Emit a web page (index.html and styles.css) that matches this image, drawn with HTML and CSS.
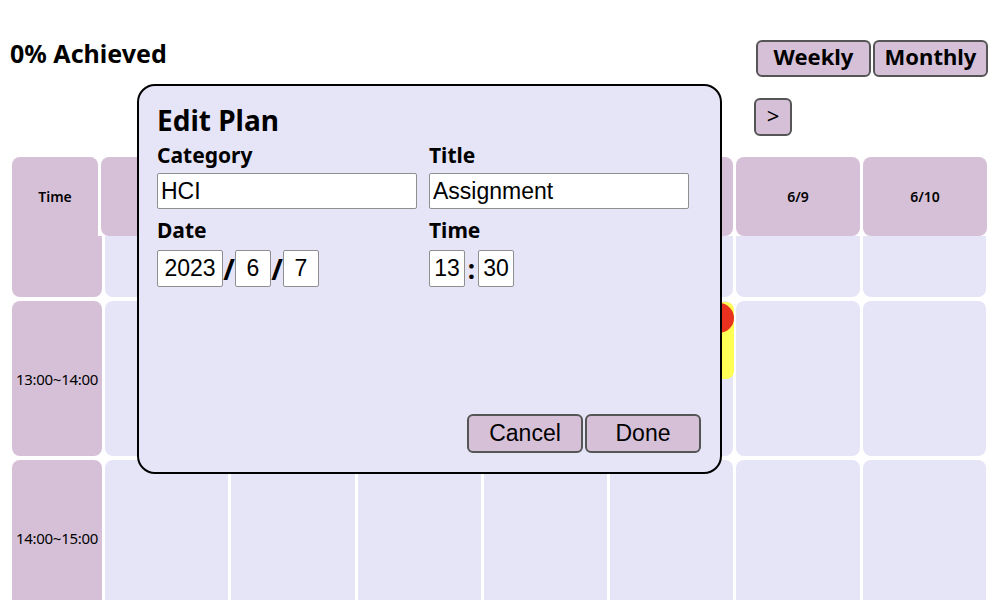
FILE: index.html
```html
<!DOCTYPE html>
<html lang="en">
<head>
<meta charset="utf-8">
<title>Planner</title>
<link rel="stylesheet" href="styles.css">
</head>
<body>
<div class="page">
  <header class="top">
    <h1 class="achieved">0% Achieved</h1>
    <div class="views">
      <button class="btn view-btn">Weekly</button>
      <button class="btn view-btn">Monthly</button>
    </div>
  </header>

  <nav class="week-nav">
    <button class="btn nav-btn">&gt;</button>
  </nav>

  <section class="calendar">
    <div class="cal-head">
      <div class="hcell">Time</div>
      <div class="hcell">6/4</div>
      <div class="hcell">6/5</div>
      <div class="hcell">6/6</div>
      <div class="hcell">6/7</div>
      <div class="hcell">6/8</div>
      <div class="hcell">6/9</div>
      <div class="hcell">6/10</div>
    </div>
    <div class="cal-body">
      <div class="tcell first"></div>
      <div class="dcell first"></div><div class="dcell first"></div><div class="dcell first"></div><div class="dcell first"></div><div class="dcell first"></div><div class="dcell first"></div><div class="dcell first"></div>

      <div class="tcell">13:00~14:00</div>
      <div class="dcell"></div><div class="dcell"></div><div class="dcell"></div><div class="dcell"></div>
      <div class="dcell"><div class="event"><span class="event-dot"></span></div></div>
      <div class="dcell"></div><div class="dcell"></div>

      <div class="tcell">14:00~15:00</div>
      <div class="dcell"></div><div class="dcell"></div><div class="dcell"></div><div class="dcell"></div><div class="dcell"></div><div class="dcell"></div><div class="dcell"></div>
    </div>
  </section>

  <div class="modal">
    <h2 class="modal-title">Edit Plan</h2>
    <div class="form-grid">
      <div class="field">
        <label class="field-label">Category</label>
        <input class="text-input" type="text" value="HCI">
      </div>
      <div class="field">
        <label class="field-label">Title</label>
        <input class="text-input" type="text" value="Assignment">
      </div>
      <div class="field">
        <label class="field-label">Date</label>
        <div class="inline-inputs">
          <input class="num-input year" type="text" value="2023">
          <span class="sep">/</span>
          <input class="num-input" type="text" value="6">
          <span class="sep">/</span>
          <input class="num-input" type="text" value="7">
        </div>
      </div>
      <div class="field">
        <label class="field-label">Time</label>
        <div class="inline-inputs">
          <input class="num-input" type="text" value="13">
          <span class="sep colon">:</span>
          <input class="num-input" type="text" value="30">
        </div>
      </div>
    </div>
    <div class="modal-actions">
      <button class="btn act-btn">Cancel</button>
      <button class="btn act-btn">Done</button>
    </div>
  </div>
</div>
</body>
</html>
```

FILE: styles.css
```css
* { box-sizing: border-box; }

html, body {
  margin: 0;
  padding: 0;
  background: #ffffff;
}

body {
  font-family: "Noto Sans", "Noto Sans CJK KR", sans-serif;
  color: #000;
  width: 1000px;
  height: 600px;
  overflow: hidden;
}

.page {
  position: relative;
  width: 1000px;
  height: 600px;
  padding-top: 40px;
  overflow: hidden;
}

.btn {
  background: #d6c0d8;
  border: 2px solid #555;
  border-radius: 6px;
  color: #000;
  padding: 0;
  cursor: pointer;
}

.top {
  display: flex;
  justify-content: space-between;
  align-items: center;
  height: 37px;
  padding: 0 12px 0 10px;
}

.achieved {
  margin: 0;
  font-size: 25px;
  font-weight: 700;
  line-height: 30px;
  position: relative;
  top: -6px;
}

.views {
  display: flex;
  gap: 2px;
}

.view-btn {
  width: 115px;
  height: 37px;
  font-family: "Noto Sans", sans-serif;
  font-weight: 700;
  font-size: 22px;
  line-height: 1;
  padding-bottom: 5px;
}

.week-nav {
  display: flex;
  justify-content: flex-end;
  align-items: center;
  margin-top: 21px;
  height: 38px;
  padding-right: 208px;
}

.nav-btn {
  width: 38px;
  height: 38px;
  font-family: "Noto Sans", sans-serif;
  font-size: 22px;
  line-height: 1;
  padding-bottom: 4px;
}

.calendar {
  margin: 21px 14px 0 12px;
}

.cal-head {
  display: grid;
  grid-template-columns: 86px repeat(7, 124px);
  column-gap: 3px;
  height: 79px;
}

.hcell {
  background: #d6c0d8;
  border-radius: 8px 8px 0 0;
  display: flex;
  align-items: center;
  justify-content: center;
  font-size: 14px;
  font-weight: 600;
}

.hcell + .hcell {
  border-radius: 8px;
}

.cal-body {
  display: grid;
  grid-template-columns: 90px repeat(7, 1fr);
  grid-template-rows: 61px 155px 155px;
  column-gap: 3px;
  row-gap: 4px;
}

.tcell {
  background: #d6c0d8;
  border-radius: 8px;
  display: flex;
  align-items: center;
  justify-content: center;
  font-size: 15px;
  letter-spacing: -0.3px;
}

.tcell.first {
  border-radius: 0 0 8px 8px;
}

.dcell {
  background: #e6e4f7;
  border-radius: 8px;
  position: relative;
}

.dcell.first {
  border-radius: 0 0 8px 8px;
}

.event {
  position: absolute;
  top: 1px;
  left: 2px;
  right: -1px;
  height: 77px;
  background: #ffff55;
  border-radius: 8px;
}

.event-dot {
  position: absolute;
  top: 1px;
  right: 0;
  width: 30px;
  height: 30px;
  border-radius: 50%;
  background: #e8321f;
}

.modal {
  position: absolute;
  left: 137px;
  top: 84px;
  width: 585px;
  height: 390px;
  background: #e6e4f7;
  border: 2px solid #000;
  border-radius: 18px;
  padding: 18px 19px 19px 18px;
  display: flex;
  flex-direction: column;
}

.modal-title {
  margin: 0;
  font-size: 28px;
  font-weight: 700;
  line-height: 33px;
}

.form-grid {
  display: grid;
  grid-template-columns: 260px 260px;
  column-gap: 12px;
  row-gap: 3px;
}

.field {
  display: flex;
  flex-direction: column;
}

.field-label {
  font-size: 21px;
  font-weight: 700;
  line-height: 26px;
  height: 36px;
  padding-top: 5px;
}

.text-input {
  width: 260px;
  height: 36px;
  border: 1px solid #8f8f8f;
  border-radius: 2px;
  background: #fff;
  font-family: "Liberation Sans", Arial, sans-serif;
  font-size: 23px;
  padding: 0 3px;
  color: #000;
}

.inline-inputs {
  display: flex;
  align-items: center;
  margin-top: 2px;
}

.num-input {
  width: 36px;
  height: 37px;
  border: 1px solid #8f8f8f;
  border-radius: 2px;
  background: #fff;
  font-family: "Liberation Sans", Arial, sans-serif;
  font-size: 23px;
  text-align: center;
  padding: 0;
  color: #000;
}

.num-input.year {
  width: 66px;
}

.sep {
  width: 12px;
  text-align: center;
  font-size: 28px;
  font-weight: 700;
  line-height: 1;
}

.sep.colon {
  width: 13px;
  font-size: 26px;
}

.modal-actions {
  margin-top: auto;
  display: flex;
  justify-content: flex-end;
  gap: 2px;
}

.act-btn {
  width: 116px;
  height: 39px;
  font-family: "Liberation Sans", Arial, sans-serif;
  font-size: 23px;
  line-height: 1;
}
```
